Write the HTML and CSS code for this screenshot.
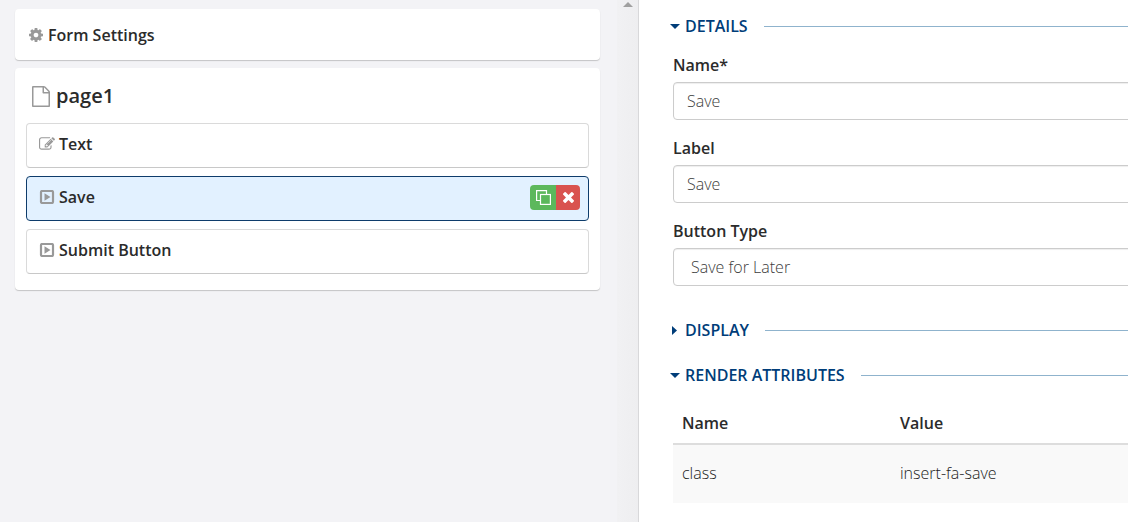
FILE: index.html
```html
<!DOCTYPE html>
<html lang="en">
<head>
    <meta charset="UTF-8">
    <meta name="viewport" content="width=device-width, initial-scale=1.0">
    <title>Form Builder</title>
    <link rel="stylesheet" href="styles.css">
</head>
<body>
    <div class="builder">
        <div class="outline">
            <div class="outline-list">
                <div class="card settings">
                    <svg class="icon" width="14" height="14" viewBox="128 128 1536 1536"><path d="M1152 896q0-106-75-181t-181-75-181 75-75 181 75 181 181 75 181-75 75-181zm512-109v222q0 12-8 23t-20 13l-185 28q-19 54-39 91 35 50 107 138 10 12 10 25t-9 23q-27 37-99 108t-94 71q-12 0-26-9l-138-108q-44 23-91 38-16 136-29 186-7 28-36 28h-222q-14 0-24.5-8.5t-11.5-21.5l-28-184q-49-16-90-37l-141 107q-10 9-25 9-14 0-25-11-126-114-165-168-7-10-7-23 0-12 8-23 15-21 51-66.5t54-70.5q-27-50-41-99l-183-27q-13-2-21-12.5t-8-23.5v-222q0-12 8-23t19-13l186-28q14-46 39-92-40-57-107-138-10-12-10-24 0-10 9-23 26-36 98.5-107.5t94.5-71.5q13 0 26 10l138 107q44-23 91-38 16-136 29-186 7-28 36-28h222q14 0 24.5 8.5t11.5 21.5l28 184q49 16 90 37l142-107q9-9 24-9 13 0 25 10 129 119 165 170 7 8 7 22 0 12-8 23-15 21-51 66.5t-54 70.5q26 50 41 98l183 28q13 2 21 12.5t8 23.5z"/></svg>
                    <span>Form Settings</span>
                </div>
                <div class="card page">
                    <h2 class="page-title">
                        <svg class="icon" width="18" height="21" viewBox="128 0 1536 1792"><path d="M1596 380q28 28 48 76t20 88v1152q0 40-28 68t-68 28h-1344q-40 0-68-28t-28-68v-1600q0-40 28-68t68-28h896q40 0 88 20t76 48zm-444-244v376h376q-10-29-22-41l-313-313q-12-12-41-22zm384 1528v-1024h-416q-40 0-68-28t-28-68v-416h-768v1536h1280z"/></svg>
                        <span>page1</span>
                    </h2>
                    <div class="item">
                        <svg class="icon" width="16" height="14" viewBox="0 128 1792 1536"><path d="M888 1184l116-116-152-152-116 116v56h96v96h56zm440-720q-16-16-33 1l-350 350q-17 17-1 33t33-1l350-350q17-17 1-33zm80 594v190q0 119-84.5 203.5t-203.5 84.5h-832q-119 0-203.5-84.5t-84.5-203.5v-832q0-119 84.5-203.5t203.5-84.5h832q63 0 117 25 15 7 18 23 3 17-9 29l-49 49q-14 14-32 8-23-6-45-6h-832q-66 0-113 47t-47 113v832q0 66 47 113t113 47h832q66 0 113-47t47-113v-126q0-13 9-22l64-64q15-15 35-7t20 29zm-96-738l288 288-672 672h-288v-288zm444 132l-92 92-288-288 92-92q28-28 68-28t68 28l152 152q28 28 28 68t-28 68z"/></svg>
                        <span>Text</span>
                    </div>
                    <div class="item selected">
                        <svg class="icon" width="16" height="14" viewBox="0 0 16 14"><rect x="2" y="1" width="12" height="12" rx="1.2" fill="none" stroke="currentColor" stroke-width="2.2"/><path d="M5.5 3.2v7.6L11.5 7z"/></svg>
                        <span>Save</span>
                        <div class="actions">
                            <button class="copy" type="button" aria-label="Copy">
                                <svg width="16" height="16" viewBox="0 0 16 16" fill="none" stroke="currentColor" stroke-width="1.2"><path d="M5 11.5H1.6V1.6h9.9V5"/><rect x="5.5" y="5.5" width="9.9" height="9.9"/></svg>
                            </button>
                            <button class="remove" type="button" aria-label="Remove">
                                <svg width="11" height="11" viewBox="302 366 1188 1188" fill="currentColor"><path d="M1490 1322q0 40-28 68l-136 136q-28 28-68 28t-68-28l-294-294-294 294q-28 28-68 28t-68-28l-136-136q-28-28-28-68t28-68l294-294-294-294q-28-28-28-68t28-68l136-136q28-28 68-28t68 28l294 294 294-294q28-28 68-28t68 28l136 136q28 28 28 68t-28 68l-294 294 294 294q28 28 28 68z"/></svg>
                            </button>
                        </div>
                    </div>
                    <div class="item">
                        <svg class="icon" width="16" height="14" viewBox="0 0 16 14"><rect x="2" y="1" width="12" height="12" rx="1.2" fill="none" stroke="currentColor" stroke-width="2.2"/><path d="M5.5 3.2v7.6L11.5 7z"/></svg>
                        <span>Submit Button</span>
                    </div>
                </div>
            </div>
            <div class="scroll-track">
                <svg width="10" height="5" viewBox="0 0 10 5"><path d="M0 5L5 0l5 5z" fill="#a0a0a0"/></svg>
            </div>
        </div>

        <div class="properties">
            <div class="properties-body">
                <h3 class="section">
                    <button type="button" aria-expanded="true">
                        <svg width="10" height="10" viewBox="0 0 10 10"><path d="M0 3h10L5 8z" fill="currentColor"/></svg>
                        DETAILS
                    </button>
                </h3>
                <div class="fields">
                    <div class="field">
                        <label for="name">Name*</label>
                        <input id="name" type="text" value="Save">
                    </div>
                    <div class="field">
                        <label for="label">Label</label>
                        <input id="label" type="text" value="Save">
                    </div>
                    <div class="field">
                        <label for="type">Button Type</label>
                        <select id="type">
                            <option>Save for Later</option>
                        </select>
                    </div>
                </div>
                <h3 class="section">
                    <button type="button" aria-expanded="false">
                        <svg width="10" height="10" viewBox="0 0 10 10"><path d="M2 1v9l5-4.5z" fill="currentColor"/></svg>
                        DISPLAY
                    </button>
                </h3>
                <h3 class="section">
                    <button type="button" aria-expanded="true">
                        <svg width="10" height="10" viewBox="0 0 10 10"><path d="M0 3h10L5 8z" fill="currentColor"/></svg>
                        RENDER ATTRIBUTES
                    </button>
                </h3>
                <table class="attributes">
                    <thead>
                        <tr><th class="col-name">Name</th><th>Value</th></tr>
                    </thead>
                    <tbody>
                        <tr><td>class</td><td>insert-fa-save</td></tr>
                    </tbody>
                </table>
            </div>
        </div>
    </div>
</body>
</html>
```
FILE: styles.css
```css
* {
    box-sizing: border-box;
}
body {
    margin: 0;
    background: #fff;
    color: #2b2b2b;
    font-family: "Open Sans", sans-serif;
    font-size: 16px;
    line-height: 22px;
}
button, input, select {
    font: inherit;
    color: inherit;
}
svg {
    display: block;
    flex: none;
}
.builder {
    display: grid;
    grid-template-columns: 639fr 489fr;
    min-height: 100vh;
}

/* left side */
.outline {
    display: flex;
    background: #f3f3f6;
    border-right: 1px solid #d8d8da;
}
.outline-list {
    flex: 1;
    display: flex;
    flex-direction: column;
    gap: 8px;
    padding: 9px 17px 9px 15px;
}
.scroll-track {
    display: flex;
    justify-content: center;
    align-items: flex-start;
    width: 21px;
    padding-top: 2px;
    background: linear-gradient(to right, #f1f1f3, #eeeef0);
}
.card {
    background: #fff;
    border-radius: 4px;
    box-shadow: 0 1px 1px #c4c4c6;
    font-weight: 600;
}
.icon {
    fill: currentColor;
    color: #999;
}
.settings {
    display: flex;
    align-items: center;
    gap: 5px;
    height: 51px;
    padding: 0 14px;
}
.page {
    display: flex;
    flex-direction: column;
    gap: 8px;
    padding: 14px 11px 16px;
}
.page-title {
    display: flex;
    align-items: center;
    gap: 6px;
    margin: 0 0 5px;
    padding-left: 6px;
    font-size: 20px;
    font-weight: 600;
    line-height: 28px;
}
.item {
    display: flex;
    align-items: center;
    gap: 4px;
    height: 45px;
    padding: 0 8px 3px 12px;
    border: 1px solid #dadada;
    border-bottom-color: #c8c8c8;
    border-radius: 4px;
}
.selected {
    background: #e2f1ff;
    border-color: #0e3c6b;
}
.actions {
    display: flex;
    margin-left: auto;
    border-radius: 4px;
    overflow: hidden;
}
.actions button {
    display: flex;
    align-items: center;
    justify-content: center;
    height: 25px;
    padding: 0;
    border: 0;
    color: #fff;
}
.actions .copy {
    width: 26px;
    background: #5cb85c;
}
.actions .remove {
    width: 24px;
    background: #d9534f;
}

/* right side, the form runs on under the window edge */
.properties {
    overflow: hidden;
}
.properties-body {
    margin-right: -24px;
    padding: 15px 0 19px 34px;
}
.section {
    display: flex;
    align-items: center;
    gap: 16px;
    margin: 0 0 23px;
    font-size: 16px;
    font-weight: 600;
    color: #003d79;
}
.section::after {
    content: "";
    flex: 1;
    height: 1px;
    background: #8fb3cd;
}
.section button {
    display: flex;
    align-items: center;
    gap: 5px;
    margin-left: -3px;
    padding: 0;
    border: 0;
    background: none;
}
.fields {
    display: flex;
    flex-direction: column;
    gap: 17px;
    margin: -6px 0 33px;
}
.field label {
    display: block;
    margin-bottom: 6px;
    font-weight: 600;
}
.field input, .field select {
    display: block;
    width: 100%;
    height: 38px;
    padding: 0 13px;
    border: 1px solid #ccc;
    border-radius: 4px;
    background: #fff;
    box-shadow: inset 0 1px 1px #eee;
    color: #3c3c3c;
    font-weight: 300;
}
.field select {
    appearance: none;
    padding-left: 17px;
}
.attributes {
    width: 100%;
    margin-top: -6px;
    border-collapse: collapse;
    table-layout: fixed;
    text-align: left;
}
.attributes th {
    padding: 9px;
    border-bottom: 2px solid #ddd;
    font-weight: 600;
}
.attributes td {
    padding: 17px 9px 19px;
    background: #f9f9f9;
    color: #1c1c1c;
    font-weight: 300;
}
.col-name {
    width: 218px;
}
```
